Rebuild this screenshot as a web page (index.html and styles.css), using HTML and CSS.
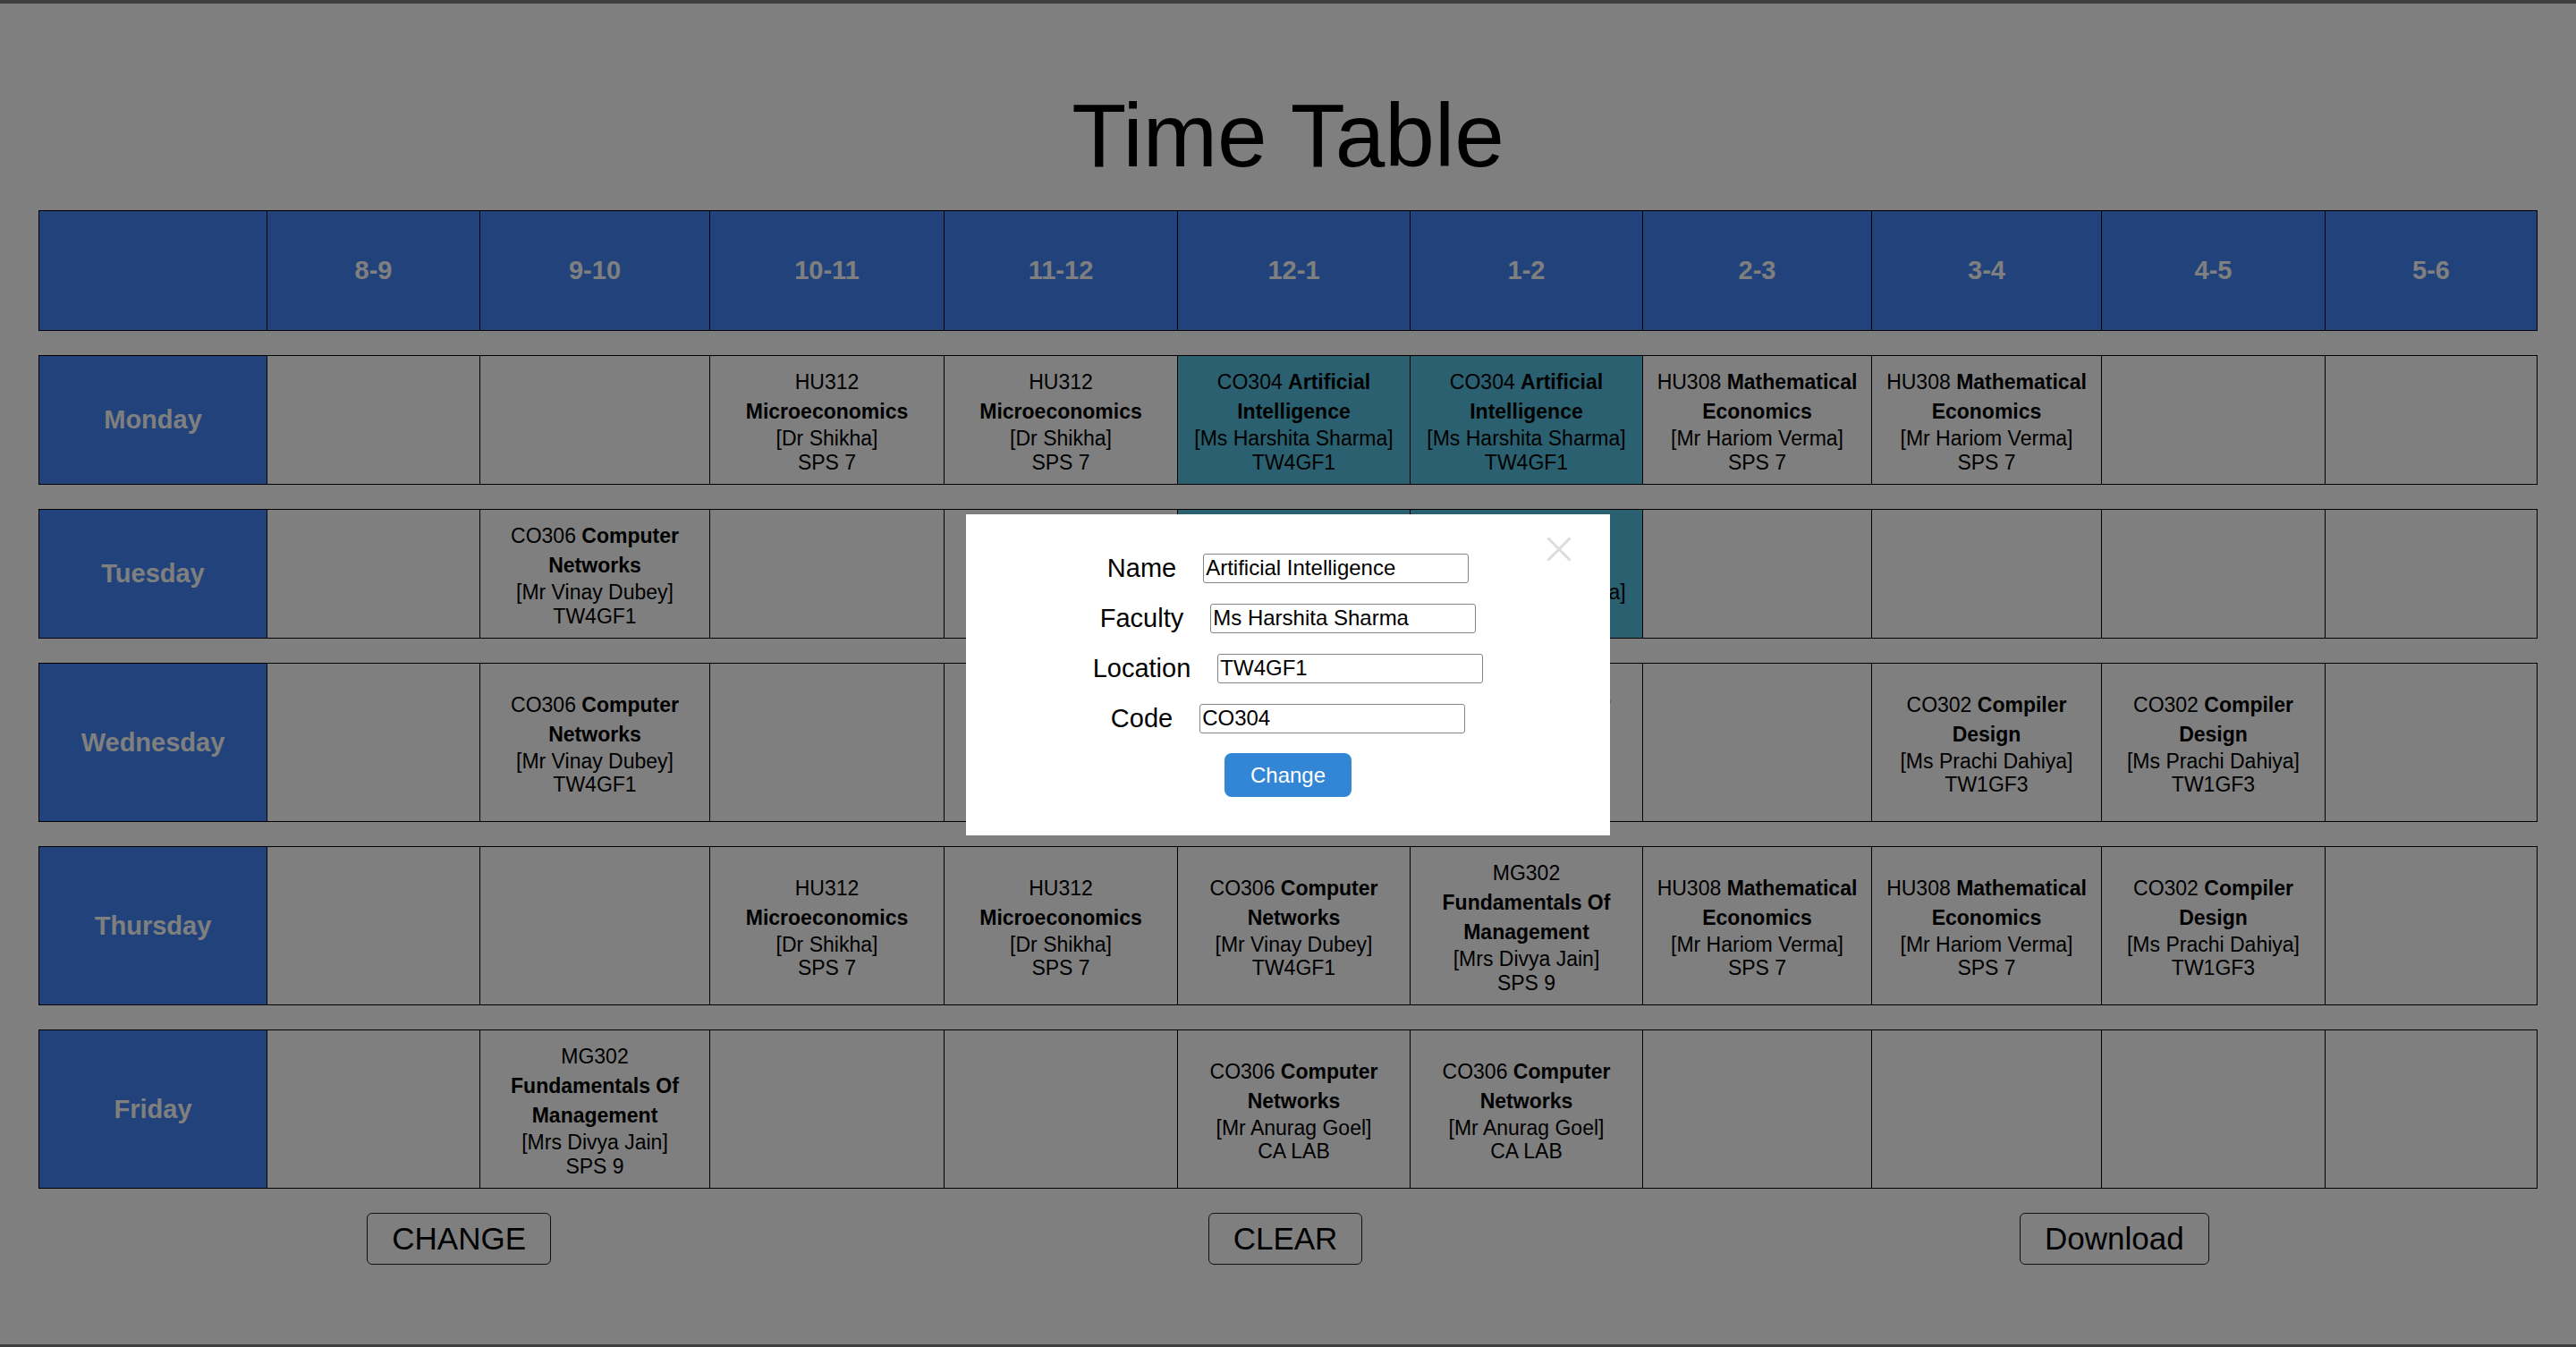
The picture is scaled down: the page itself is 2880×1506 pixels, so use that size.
FILE: index.html
```html
<!DOCTYPE html>
<html lang="en">
<head>
<meta charset="utf-8">
<title>Time Table</title>
<link rel="stylesheet" href="styles.css">
</head>
<body>
<div class="page">
  <h1 class="title">Time Table</h1>
  <div class="timetable">
    <div class="tt-row head">
      <div class="cell"></div>
      <div class="cell">8-9</div>
      <div class="cell">9-10</div>
      <div class="cell">10-11</div>
      <div class="cell">11-12</div>
      <div class="cell">12-1</div>
      <div class="cell">1-2</div>
      <div class="cell">2-3</div>
      <div class="cell">3-4</div>
      <div class="cell">4-5</div>
      <div class="cell">5-6</div>
    </div>

    <div class="tt-row">
      <div class="cell day">Monday</div>
      <div class="cell"></div>
      <div class="cell"></div>
      <div class="cell"><div class="t">HU312 <b>Microeconomics</b></div><div class="d">[Dr Shikha]</div><div class="d">SPS 7</div></div>
      <div class="cell"><div class="t">HU312 <b>Microeconomics</b></div><div class="d">[Dr Shikha]</div><div class="d">SPS 7</div></div>
      <div class="cell hl"><div class="t">CO304 <b>Artificial Intelligence</b></div><div class="d">[Ms Harshita Sharma]</div><div class="d">TW4GF1</div></div>
      <div class="cell hl"><div class="t">CO304 <b>Artificial Intelligence</b></div><div class="d">[Ms Harshita Sharma]</div><div class="d">TW4GF1</div></div>
      <div class="cell"><div class="t">HU308 <b>Mathematical Economics</b></div><div class="d">[Mr Hariom Verma]</div><div class="d">SPS 7</div></div>
      <div class="cell"><div class="t">HU308 <b>Mathematical Economics</b></div><div class="d">[Mr Hariom Verma]</div><div class="d">SPS 7</div></div>
      <div class="cell"></div>
      <div class="cell"></div>
    </div>

    <div class="tt-row">
      <div class="cell day">Tuesday</div>
      <div class="cell"></div>
      <div class="cell"><div class="t">CO306 <b>Computer Networks</b></div><div class="d">[Mr Vinay Dubey]</div><div class="d">TW4GF1</div></div>
      <div class="cell"></div>
      <div class="cell"></div>
      <div class="cell hl"><div class="t">CO304 <b>Artificial Intelligence</b></div><div class="d">[Ms Harshita Sharma]</div><div class="d">TW4GF1</div></div>
      <div class="cell hl"><div class="t">CO304 <b>Artificial Intelligence</b></div><div class="d">[Ms Harshita Sharma]</div><div class="d">TW4GF1</div></div>
      <div class="cell"></div>
      <div class="cell"></div>
      <div class="cell"></div>
      <div class="cell"></div>
    </div>

    <div class="tt-row">
      <div class="cell day">Wednesday</div>
      <div class="cell"></div>
      <div class="cell"><div class="t">CO306 <b>Computer Networks</b></div><div class="d">[Mr Vinay Dubey]</div><div class="d">TW4GF1</div></div>
      <div class="cell"></div>
      <div class="cell"></div>
      <div class="cell"><div class="t">MG302 <b>Fundamentals Of Management</b></div><div class="d">[Mrs Divya Jain]</div><div class="d">SPS 9</div></div>
      <div class="cell"><div class="t">CO306 <b>Computer Networks</b></div><div class="d">[Mr Anurag Goel]</div><div class="d">NETWORKS LAB</div></div>
      <div class="cell"></div>
      <div class="cell"><div class="t">CO302 <b>Compiler Design</b></div><div class="d">[Ms Prachi Dahiya]</div><div class="d">TW1GF3</div></div>
      <div class="cell"><div class="t">CO302 <b>Compiler Design</b></div><div class="d">[Ms Prachi Dahiya]</div><div class="d">TW1GF3</div></div>
      <div class="cell"></div>
    </div>

    <div class="tt-row">
      <div class="cell day">Thursday</div>
      <div class="cell"></div>
      <div class="cell"></div>
      <div class="cell"><div class="t">HU312 <b>Microeconomics</b></div><div class="d">[Dr Shikha]</div><div class="d">SPS 7</div></div>
      <div class="cell"><div class="t">HU312 <b>Microeconomics</b></div><div class="d">[Dr Shikha]</div><div class="d">SPS 7</div></div>
      <div class="cell"><div class="t">CO306 <b>Computer Networks</b></div><div class="d">[Mr Vinay Dubey]</div><div class="d">TW4GF1</div></div>
      <div class="cell"><div class="t">MG302 <b>Fundamentals Of Management</b></div><div class="d">[Mrs Divya Jain]</div><div class="d">SPS 9</div></div>
      <div class="cell"><div class="t">HU308 <b>Mathematical Economics</b></div><div class="d">[Mr Hariom Verma]</div><div class="d">SPS 7</div></div>
      <div class="cell"><div class="t">HU308 <b>Mathematical Economics</b></div><div class="d">[Mr Hariom Verma]</div><div class="d">SPS 7</div></div>
      <div class="cell"><div class="t">CO302 <b>Compiler Design</b></div><div class="d">[Ms Prachi Dahiya]</div><div class="d">TW1GF3</div></div>
      <div class="cell"></div>
    </div>

    <div class="tt-row">
      <div class="cell day">Friday</div>
      <div class="cell"></div>
      <div class="cell"><div class="t">MG302 <b>Fundamentals Of Management</b></div><div class="d">[Mrs Divya Jain]</div><div class="d">SPS 9</div></div>
      <div class="cell"></div>
      <div class="cell"></div>
      <div class="cell"><div class="t">CO306 <b>Computer Networks</b></div><div class="d">[Mr Anurag Goel]</div><div class="d">CA LAB</div></div>
      <div class="cell"><div class="t">CO306 <b>Computer Networks</b></div><div class="d">[Mr Anurag Goel]</div><div class="d">CA LAB</div></div>
      <div class="cell"></div>
      <div class="cell"></div>
      <div class="cell"></div>
      <div class="cell"></div>
    </div>
  </div>

  <div class="actions">
    <button class="btn" type="button">CHANGE</button>
    <button class="btn" type="button">CLEAR</button>
    <button class="btn" type="button">Download</button>
  </div>
</div>

<div class="backdrop">
  <div class="modal">
    <svg class="close" viewBox="0 0 28 28" aria-label="Close">
      <path d="M1.5 1.5 L26.5 26.5 M26.5 1.5 L1.5 26.5" stroke="#dcdcdc" stroke-width="3" fill="none"/>
    </svg>
    <div class="form">
      <div class="field"><label class="lbl">Name</label><input class="inp" type="text" value="Artificial Intelligence"></div>
      <div class="field"><label class="lbl">Faculty</label><input class="inp" type="text" value="Ms Harshita Sharma"></div>
      <div class="field"><label class="lbl">Location</label><input class="inp" type="text" value="TW4GF1"></div>
      <div class="field"><label class="lbl">Code</label><input class="inp" type="text" value="CO304"></div>
    </div>
    <button class="change" type="button">Change</button>
  </div>
</div>

<div class="frame"></div>
</body>
</html>
```

FILE: styles.css
```css
* {
  box-sizing: border-box;
}

html,
body {
  margin: 0;
}

body {
  background: #ffffff;
  color: #000;
  font-family: "Liberation Sans", Arial, sans-serif;
}

.page {
  padding: 0 43px;
}

.title {
  margin: 95px 0 28px;
  font-size: 100px;
  line-height: 112px;
  font-weight: normal;
  text-align: center;
}

.timetable {
  display: flex;
  flex-direction: column;
  gap: 27px;
}

.tt-row {
  display: grid;
  grid-template-columns: 254px 238px 257px 262px 261px 260px 260px 256px 257px 250px 237px;
  border: 1px solid #000;
}

.tt-row.head {
  height: 135px;
}

.cell {
  display: flex;
  flex-direction: column;
  justify-content: center;
  align-items: center;
  text-align: center;
  padding: 13px 14px 11px;
  font-size: 23px;
}

.cell + .cell {
  border-left: 1px solid #000;
}

.head .cell,
.cell.day {
  background: #4285f4;
  color: #fff;
  font-weight: bold;
  font-size: 29px;
  padding: 0;
}

.cell.hl {
  background: #54c0e0;
}

.t {
  line-height: 33px;
}

.d {
  line-height: 26.5px;
}

.actions {
  display: flex;
  justify-content: space-around;
  margin-top: 27px;
}

.btn {
  font-family: "Liberation Sans", Arial, sans-serif;
  font-size: 35px;
  line-height: 40px;
  padding: 8px 27px;
  border: 1px solid #222;
  border-radius: 6px;
  background: #fff;
  color: #000;
}

.backdrop {
  position: fixed;
  inset: 0;
  background: rgba(0, 0, 0, 0.5);
  display: flex;
  align-items: center;
  justify-content: center;
  padding-top: 3px;
  z-index: 10;
}

.modal {
  position: relative;
  width: 720px;
  background: #fff;
  padding: 44px 0 43px;
  display: flex;
  flex-direction: column;
  align-items: center;
}

.close {
  position: absolute;
  top: 25px;
  right: 43px;
  width: 28px;
  height: 28px;
}

.form {
  display: flex;
  flex-direction: column;
  align-items: center;
  gap: 23px;
}

.field {
  display: flex;
  align-items: center;
  gap: 30px;
  height: 33px;
}

.lbl {
  font-size: 29px;
  line-height: 33px;
  color: #000;
}

.inp {
  width: 297px;
  height: 33px;
  padding: 0 2px;
  border: 1px solid #858585;
  border-radius: 3px;
  font-family: "Liberation Sans", Arial, sans-serif;
  font-size: 24px;
  color: #000;
  background: #fff;
}

.change {
  margin-top: 22px;
  padding: 11px 29px;
  border: none;
  border-radius: 8px;
  background: #3386d6;
  color: #fff;
  font-family: "Liberation Sans", Arial, sans-serif;
  font-size: 24px;
  line-height: 27.5px;
}

.frame {
  position: fixed;
  inset: 0;
  border-top: 4px solid #3e3e3e;
  border-bottom: 3px solid #3e3e3e;
  pointer-events: none;
  z-index: 20;
}
```
